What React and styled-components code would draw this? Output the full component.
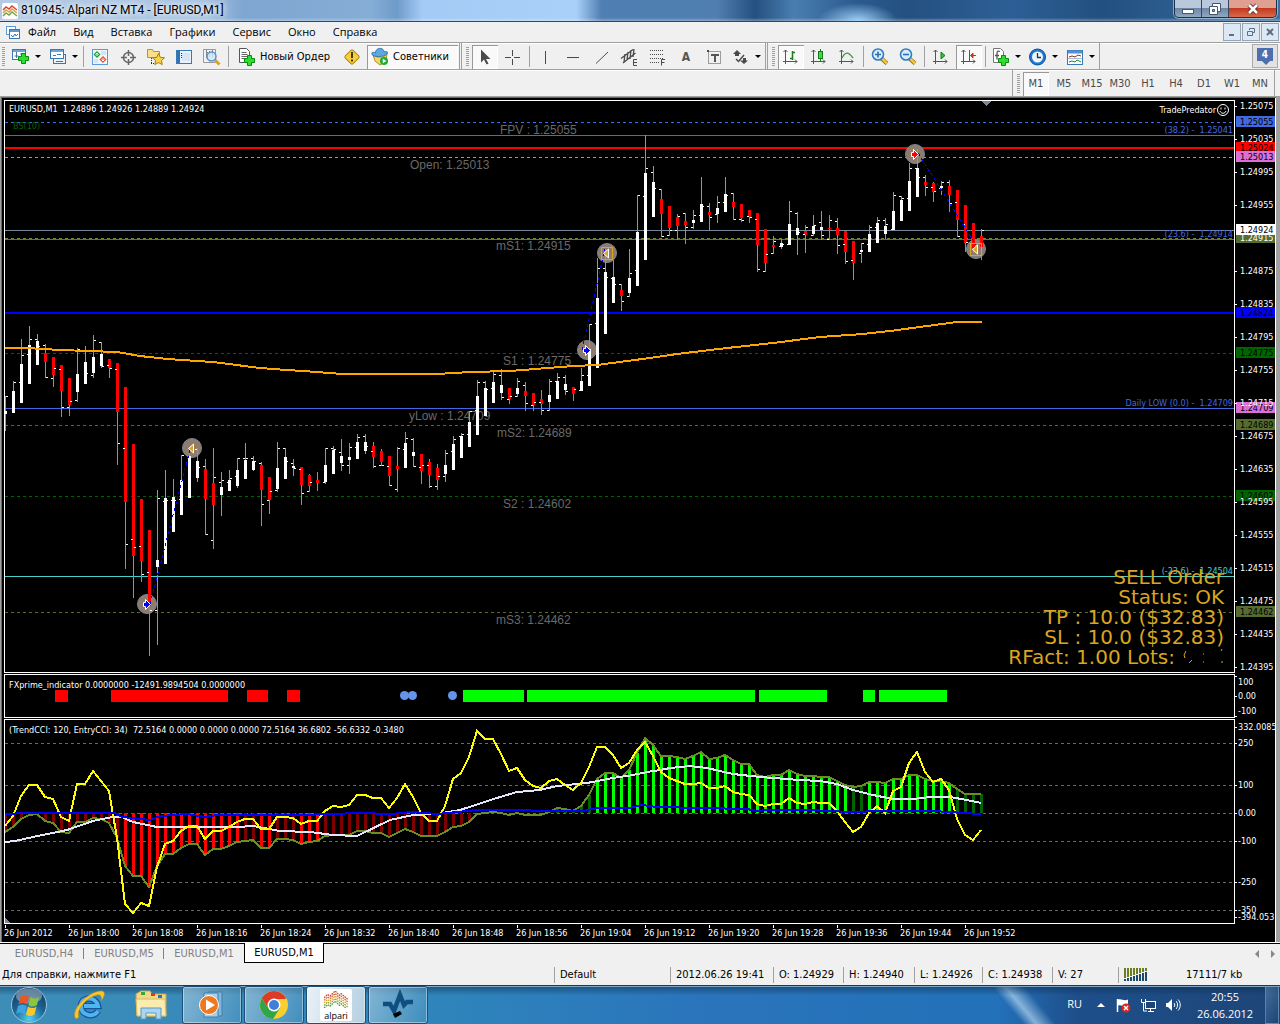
import React from 'react';
import styled, { createGlobalStyle, css } from 'styled-components';

const UI = '"DejaVu Sans Condensed", "DejaVu Sans", sans-serif';
const SEGOE = '"Open Sans", "Noto Sans", sans-serif';

const Global = createGlobalStyle`
  * { box-sizing: border-box; }
  html, body { margin: 0; background: #f0f0f0; }
  body { font: 11px/14px ${UI}; color: #000; }
  button { font: inherit; color: inherit; border: 0; margin: 0; padding: 0; background: none; }
  svg { display: block; flex: none; }
`;

/* ---------- data ---------- */

const STEP = 8;
const barX = (i) => 5 + i * STEP;

// direction, high, low, body top, body bottom, open tick, close tick
const CANDLES = `u 396 431 411 414 0 396
u 381 413 391 413 0 382
u 339 403 364 403 382 355
u 326 384 345 384 354 339
u 334 365 341 365 339 346
d 344 378 353 362 345 377
d 357 387 357 375 378 368
d 365 417 365 391 369 407
d 378 416 378 405 407 401
u 348 402 374 392 400 349
u 346 384 362 384 350 373
u 335 378 357 373 375 340
u 342 368 354 366 342 366
d 359 378 359 368 365 368
d 363 465 363 412 369 443
d 387 569 387 502 448 544
d 444 598 444 556 539 547
d 499 582 499 561 546 574
d 530 656 530 606 572 610
u 490 645 560 567 610 498
u 470 564 498 564 501 500
u 479 532 497 532 500 500
u 455 515 480 515 499 455
u 449 498 456 498 0 0
u 448 482 461 478 449 467
d 459 535 469 499 466 534
d 448 549 483 505 540 477
u 472 516 487 495 482 480
u 470 491 480 491 482 478
u 458 488 470 486 476 458
u 443 479 460 479 458 458
u 456 471 461 470 458 461
d 462 526 465 490 463 504
d 477 514 477 500 500 491
u 442 492 468 489 490 448
u 448 479 457 479 448 461
u 459 476 466 468 463 468
d 467 505 467 485 469 493
d 474 492 475 486 491 482
d 472 491 480 483 0 0
u 448 484 465 482 482 448
u 446 474 450 474 448 449
u 439 471 456 463 452 465
u 443 474 457 460 465 447
u 434 459 442 459 447 437
u 434 454 442 451 436 446
d 442 468 446 457 451 466
d 449 466 451 462 465 465
d 456 486 456 476 466 485
d 447 492 466 469 489 448
u 432 468 443 468 449 438
u 438 467 452 456 439 466
d 454 484 454 471 467 465
d 459 488 462 475 465 486
d 464 490 468 480 486 476
u 450 482 465 474 476 453
u 436 470 444 470 451 439
u 433 458 436 458 436 434
u 411 447 422 447 434 411
u 380 435 396 435 410 382
u 381 416 388 416 382 389
u 372 403 382 403 388 374
u 369 400 385 393 375 397
d 388 404 388 399 399 396
u 378 397 388 394 396 381
d 382 411 391 396 385 403
d 393 411 393 405 405 402
d 390 415 399 404 402 410
u 379 411 395 402 410 381
u 373 399 381 399 381 377
u 375 395 384 390 377 391
d 387 401 387 394 0 389
u 368 391 381 391 390 375
u 324 386 349 386 375 324
u 258 368 298 368 323 268
u 249 334 272 334 268 277
u 260 303 277 303 278 284
d 284 311 290 296 284 301
u 249 297 278 293 296 273
u 195 286 232 286 270 195
u 135 260 173 260 196 168
u 166 217 182 217 172 188
d 189 237 199 214 189 236
d 206 236 206 228 235 230
d 214 240 217 226 230 216
d 213 244 221 225 213 227
u 210 229 220 223 227 215
u 177 222 204 222 215 206
d 203 230 212 215 206 217
u 196 223 208 214 214 202
u 177 212 194 212 202 195
d 193 220 202 207 193 219
d 204 222 204 218 219 220
d 210 223 210 217 216 217
d 213 272 213 245 219 269
d 229 272 229 263 271 254
d 236 254 245 247 253 241
u 239 249 243 247 246 244
u 201 245 224 245 244 211
u 212 255 228 235 213 232
d 225 253 231 235 234 227
u 215 236 226 234 235 225
u 211 240 227 230 222 235
d 215 240 228 229 239 220
d 218 254 228 235 221 245
d 231 264 231 252 244 261
d 241 280 241 263 260 0
u 243 263 250 252 253 243
u 225 252 234 252 244 227
u 217 243 223 243 227 220
u 218 239 226 234 220 224
u 192 230 211 230 229 195
u 196 221 200 221 196 198
u 163 211 181 211 198 168
u 149 197 168 197 168 177
d 175 196 182 185 177 187
d 182 202 183 192 187 191
u 181 195 186 188 188 182
d 180 212 186 195 182 203
d 190 237 190 220 202 236
d 205 252 205 243 224 242
d 223 253 223 248 0 0
d 229 260 236 247 0 230`
  .split('\n')
  .map((row) => {
    const [dir, ...n] = row.split(' ');
    return [dir, ...n.map(Number)];
  });

const MA = '5,348 27,348 60,350 117,352 140,356 167,359 213,362 260,368 287,370 317,372 342,374 437,374 470,372 510,371 573,366 597,365 650,358 677,354 727,348 773,343 820,337 863,334 890,331 957,322 982,322';

const LEVELS = [
  [122, '#4169e1', 1, true],
  [135, '#4169e1', 1],
  [147, '#ff0000', 2],
  [157, '#da70d6', 1, true],
  [230, '#778899', 1],
  [238, '#6b8e23', 1, true],
  [239, '#4169e1', 1],
  [312, '#0000ff', 2],
  [353, '#006400', 1, true],
  [408, '#4169e1', 1],
  [425, '#556b2f', 1, true],
  [496, '#006400', 1, true],
  [576, '#48d1cc', 1],
  [612, '#556b2f', 1, true],
];

const PIVOTS = [
  [500, 134, 'FPV : 1.25055'],
  [410, 169, 'Open: 1.25013'],
  [496, 250, 'mS1: 1.24915'],
  [503, 365, 'S1 : 1.24775'],
  [409, 420, 'yLow : 1.24709'],
  [497, 437, 'mS2: 1.24689'],
  [503, 508, 'S2 : 1.24602'],
  [496, 624, 'mS3: 1.24462'],
];

const FIBS = [
  [133, '#4169e1', '(38.2) -\u00a0 1.25041'],
  [237, '#4169e1', '(23.6) -\u00a0 1.24914'],
  [406, '#4169e1', 'Daily LOW (0.0) -\u00a0 1.24709'],
  [574, '#48d1cc', '(-23.6) -\u00a0 1.24504'],
];

const MARKERS = [
  { x: 192, y: 448, kind: 'exit' },
  { x: 147, y: 604, kind: 'buy' },
  { x: 607, y: 253, kind: 'exit', boxed: true },
  { x: 587, y: 350, kind: 'buy' },
  { x: 915, y: 154, kind: 'sell' },
  { x: 976, y: 249, kind: 'exit', boxed: true },
];

const PRICE_TICKS = ['1.25075', '1.25035', '1.24995', '1.24955', '', '1.24875', '1.24835', '1.24795', '1.24755', '1.24715', '1.24675', '1.24635', '1.24595', '1.24555', '1.24515', '1.24475', '1.24435', '1.24395'];

const LEVEL_TAGS = [
  [116, '#4169e1', '#000', '1.25055'],
  [142, '#ff0000', '#000', '1.25024'],
  [151, '#da70d6', '#000', '1.25013'],
  [307, '#0000ff', '#000', '1.24824'],
  [347, '#006400', '#000', '1.24775'],
  [402, '#da70d6', '#000', '1.24709'],
  [419, '#556b2f', '#000', '1.24689'],
  [490, '#006400', '#000', '1.24602'],
  [606, '#556b2f', '#000', '1.24462'],
];

const CURRENT_TAGS = [
  [232, '#556b2f', '#fff', '1.24915'],
  [224, '#ffffff', '#000', '1.24924'],
];

const RED_BLOCKS = [[55, 68], [111, 228], [247, 268], [287, 300]];
const GREEN_BLOCKS = [[463, 524], [527, 755], [759, 827], [863, 875], [879, 947]];

const TREND = [832, 827, 819, 815, 814, 821, 823, 832, 833, 822, 822, 818, 819, 823, 838, 866, 876, 876, 887, 866, 854, 854, 848, 844, 844, 855, 849, 849, 846, 842, 841, 840, 848, 848, 839, 839, 840, 844, 842, 841, 836, 835, 835, 835, 831, 831, 833, 833, 837, 833, 829, 832, 836, 836, 836, 832, 827, 826, 822, 814, 813, 812, 813, 815, 813, 815, 815, 815, 812, 808, 809, 811, 806, 795, 779, 773, 773, 778, 770, 753, 738, 745, 756, 756, 757, 759, 756, 752, 759, 758, 755, 760, 764, 764, 775, 777, 775, 775, 770, 774, 776, 776, 777, 777, 781, 785, 787, 786, 782, 782, 783, 779, 779, 775, 775, 779, 781, 781, 783, 789, 794, 794, 794];

const ENTRY = [826, 816, 796, 785, 785, 797, 799, 817, 821, 784, 784, 771, 781, 791, 838, 904, 913, 903, 906, 867, 844, 841, 831, 826, 826, 839, 831, 831, 827, 822, 819, 819, 829, 829, 817, 817, 818, 824, 821, 821, 811, 806, 807, 805, 795, 795, 798, 798, 808, 798, 784, 797, 813, 821, 821, 806, 779, 773, 757, 731, 739, 739, 754, 771, 768, 780, 786, 788, 781, 779, 785, 790, 783, 767, 747, 747, 755, 768, 763, 750, 742, 756, 772, 778, 781, 784, 784, 783, 788, 788, 786, 792, 794, 795, 804, 806, 804, 804, 798, 803, 804, 802, 803, 803, 811, 822, 832, 827, 813, 806, 813, 791, 787, 763, 752, 772, 782, 779, 790, 819, 835, 840, 830];

const SLOW = '5,842 15,841 33,837 67,830 93,821 112,817 122,817 133,822 157,827 237,827 253,826 280,831 310,832 333,835 357,836 390,820 413,815 437,814 460,810 500,797 517,792 540,790 557,786 587,783 613,778 633,775 647,772 660,770 670,768 690,766 707,768 733,774 760,777 800,780 820,781 837,784 853,790 873,795 893,799 913,799 930,797 950,797 967,800 981,803';
const FLAT = '5,814 28,813 115,813 122,817 150,820 160,816 187,814 205,817 217,815 300,815 360,813 390,814 413,812 437,814 477,810 583,811 597,808 630,808 642,805 657,807 747,809 757,811 767,810 810,810 850,812 883,811 933,811 963,813 981,814';

const histColor = (i) => {
  if (i < 59) {
    const hot = (i > 14 && i < 30) || i === 32 || i === 33 || (i > 36 && i < 40);
    return hot ? '#ff0000' : '#800000';
  }
  if (i < 68) return 'none';
  return (i > 73 && i < 106) || (i > 107 && i < 119) ? '#00ff00' : '#006400';
};

const TIMES = ['2012', '18:00', '18:08', '18:16', '18:24', '18:32', '18:40', '18:48', '18:56', '19:04', '19:12', '19:20', '19:28', '19:36', '19:44', '19:52'];

/* ---------- icons ---------- */

const Icon = ({ size = 20, children, ...rest }) => (
  <svg width={size} height={size} viewBox={`0 0 ${size} ${size}`} fill="none" aria-hidden="true" {...rest}>
    {children}
  </svg>
);

const Plus = ({ x = 9, y = 8 }) => (
  <path transform={`translate(${x} ${y})`} d="M3.5.5h4v3h3v4h-3v3h-4v-3h-3v-4h3z" fill="#2fdc2f" stroke="#0a8a12" />
);

const Axes = () => (
  <path d="M4.5 3v14M2 14.5h14M2.5 5l2-2 2 2M14 12.5l2 2-2 2" stroke="#555" />
);

const Lens = ({ plus }) => (
  <Icon>
    <path d="M11.5 11.5l5.500 5" stroke="#8a6a10" strokeWidth="4" />
    <path d="M12 11.500l5 5" stroke="#f3c63a" strokeWidth="2.500" />
    <circle cx="8" cy="7.500" r="5.500" fill="#d9ecfb" stroke="#2f7dc4" strokeWidth="1.600" />
    <path d={plus ? 'M5 7.500h6M8 4.500v6' : 'M5 7.500h6'} stroke="#2f6fae" strokeWidth="1.600" />
  </Icon>
);

const ICONS = {
  newChart: (
    <Icon>
      <rect x="1.500" y="2.500" width="13" height="10" fill="#fff" stroke="#3a78b5" />
      <path d="M2 4h12" stroke="#6aa5dc" strokeWidth="2" />
      <path d="M5.500 5v6M3.500 9h4M9 7h3" stroke="#4a78a5" />
      <Plus x={7} y={6} />
    </Icon>
  ),
  profiles: (
    <Icon>
      <rect x="5.500" y="7.500" width="12" height="9" fill="#e8f2fc" stroke="#3a78b5" />
      <rect x="2.500" y="2.500" width="13" height="9" fill="#fff" stroke="#3a78b5" />
      <path d="M3 4h12" stroke="#6aa5dc" strokeWidth="2" />
      <path d="M5 8.500h3M9 7.500h4M8 14.500h7" stroke="#4a78a5" />
    </Icon>
  ),
  market: (
    <Icon>
      <rect x="2.500" y="2.500" width="15" height="15" fill="#eef6fe" stroke="#5a9ad8" />
      <path d="M7 4l3.500 3.500L7 11 3.500 7.500z" fill="#18a828" />
      <path d="M13 9l3.500 3.500L13 16l-3.500-3.500z" fill="#e2542a" />
      <path d="M7 6v3M5.500 7.500L7 6l1.500 1.500M13 11v3M11.500 12.500L13 14l1.500-1.500" stroke="#fff" />
      <path d="M11 5h5M11 7h5M4 13h4M4 15h4" stroke="#b9d3ec" />
    </Icon>
  ),
  target: (
    <Icon>
      <circle cx="10.500" cy="10.500" r="5" stroke="#666" strokeWidth="1.500" />
      <path d="M10.500 3v6M10.500 12v6M3 10.500h6M12 10.500h6" stroke="#666" strokeWidth="1.500" />
    </Icon>
  ),
  favorites: (
    <Icon>
      <path d="M1.500 10.500v-8h5l1 2h6v6z" fill="#f9e08a" stroke="#b99525" />
      <path d="M5.500 11v6M8 16.500H5" stroke="#333" strokeDasharray="1 1" />
      <path d="M12.500 6.500l1.800 3.800 4.200.5-3.100 2.800.9 4-3.800-2-3.700 2 .8-4-3.100-2.800 4.200-.5z" fill="#fbd348" stroke="#a87b10" />
    </Icon>
  ),
  data: (
    <Icon>
      <rect x="2.500" y="3.500" width="15" height="13" fill="#eaf3fd" stroke="#3a78b5" />
      <rect x="3" y="4" width="3" height="12" fill="#2f72b8" />
      <path d="M8 7h8M8 9h8M8 11h8M8 13h8" stroke="#c3d9ef" />
      <path d="M7 6.500h1M7 8.500h1M7 10.500h1" stroke="#333" />
    </Icon>
  ),
  tester: (
    <Icon>
      <path d="M1.500 2.500h12v13h-12z" fill="#f2f2f2" stroke="#999" />
      <path d="M4.500 3v8M7.500 4v6M10.500 3v7M4 5.500h2" stroke="#888" />
      <path d="M12.500 12.500l5 5" stroke="#d4a526" strokeWidth="3" />
      <circle cx="9.500" cy="9.500" r="4.500" fill="#cfe5f7cc" stroke="#5795c8" strokeWidth="1.500" />
    </Icon>
  ),
  order: (
    <Icon>
      <path d="M2.500 1.500h7l3 3v11h-10z" fill="#fff" stroke="#555" />
      <path d="M4.500 5.500h5M4.500 7.500h6M4.500 9.500h6M4.500 11.500h4" stroke="#666" />
      <Plus x={7} y={8} />
    </Icon>
  ),
  warning: (
    <Icon>
      <rect x="4.500" y="4.500" width="11" height="11" rx="1.500" transform="rotate(45 10 10)" fill="#f6cf3c" stroke="#b28a14" />
      <path d="M10 5v6M10 12.500v2" stroke="#4a3a08" strokeWidth="2" />
    </Icon>
  ),
  advisor: (
    <Icon>
      <path d="M3 8c3 3 11 3 14-1l-1 7-6 4-5-4z" fill="#f7d463" stroke="#b88f25" />
      <path d="M5.500 6c0-6 8.500-6 8.500-1 3-1 4.500 0 3 2-4 3-12 3.500-15 .500-1-2 1-3 3.500-1.500z" fill="#5fa8e0" stroke="#3578b0" />
      <circle cx="14" cy="14" r="4" fill="#1fae35" />
      <path d="M12.800 11.800l3.500 2.200-3.500 2.200z" fill="#fff" />
    </Icon>
  ),
  cursor: <Icon><path d="M6 2.500v13l3-3 2.500 5 2-1-2.500-4.500h4.500z" fill="#4a4a4a" /></Icon>,
  cross: <Icon><path d="M9.500 3v6M9.500 12v6M2 10.500h6M11 10.500h6" stroke="#4a4a4a" /></Icon>,
  vline: <Icon><path d="M9.500 4v13" stroke="#4a4a4a" /></Icon>,
  hline: <Icon><path d="M3 10.500h12" stroke="#4a4a4a" /></Icon>,
  trend: <Icon><path d="M4 16.500L16 5" stroke="#4a4a4a" /></Icon>,
  channel: (
    <Icon>
      <path d="M1 11.500l12-9M3 16L15.500 6M5 7l-1 8M8 5L7 13M11 3l-1 9M14 2l-1 8" stroke="#4a4a4a" strokeWidth="1.300" />
      <path d="M17 12.500h-3.500v6H17M13.500 15.500H17" stroke="#4a4a4a" />
    </Icon>
  ),
  fibo: (
    <Icon>
      <path d="M2 3.500h14M2 7.500h14M2 11.500h14M2 15.500h9" stroke="#4a4a4a" strokeDasharray="1 1" />
      <path d="M17 12.500h-3.500v6M13.500 15.500h3" stroke="#4a4a4a" />
    </Icon>
  ),
  label: (
    <Icon>
      <rect x="4.500" y="4.500" width="12" height="12" stroke="#4a4a4a" strokeDasharray="1 1" />
      <path d="M7 8h8M11 8v7" stroke="#555" strokeWidth="2" />
      <path d="M3 3h2v2H3z" fill="#4a4a4a" />
    </Icon>
  ),
  shapes: (
    <Icon>
      <path d="M6 3l4 4H8v2H4V7H2z" fill="#4a4a4a" />
      <path d="M5 12l2.500 2.500L13 8" stroke="#4a4a4a" strokeWidth="1.500" />
      <path d="M13 17l4-3.500h-2V11h-3v2.500h-3z" fill="#4a4a4a" />
    </Icon>
  ),
  bars: <Icon><Axes /><path d="M11.500 4v9M9 11.500h2.500M11.500 5.500H14" stroke="#1a7a1f" strokeWidth="1.500" /></Icon>,
  candles: <Icon><Axes /><path d="M11.500 2v12" stroke="#157a1c" /><rect x="9.500" y="4.500" width="4" height="7" fill="#3edb48" stroke="#157a1c" /></Icon>,
  line: <Icon><Axes /><path d="M5 11c3-6 6-7 11 0" stroke="#3b9a45" strokeWidth="1.400" /></Icon>,
  zoomIn: <Lens plus />,
  zoomOut: <Lens />,
  scroll: <Icon><Axes /><path d="M10 5l4 3.500-4 3.500z" fill="#2fc23c" stroke="#157a1c" /></Icon>,
  shift: <Icon><Axes /><path d="M10.500 3v11" stroke="#555" /><path d="M17 8.500h-5M14 6l-2.500 2.500L14 11z" stroke="#c03a12" fill="#c03a12" /></Icon>,
  indicators: (
    <Icon>
      <path d="M2.500 1.500h7l3 3v11h-10z" fill="#fff" stroke="#777" />
      <path d="M9 4.500c-2-1-3 0-3 2v6M4 8.500h4" stroke="#555" strokeWidth="1.300" />
      <Plus x={7} y={8} />
    </Icon>
  ),
  clock: (
    <Icon>
      <circle cx="9.500" cy="10" r="8" fill="#1f78d2" stroke="#0e4f9c" />
      <circle cx="9.500" cy="10" r="5.500" fill="#eef6fd" />
      <path d="M9.500 6v4.500H13" stroke="#333" strokeWidth="1.300" />
    </Icon>
  ),
  template: (
    <Icon>
      <rect x="2.500" y="3.500" width="15" height="14" fill="#fff" stroke="#3a78b5" />
      <path d="M3 5h14" stroke="#4f93d6" strokeWidth="3" />
      <path d="M4 10l3-1 3 1 3-2 3 1" stroke="#a02a1a" />
      <path d="M4 15l3-1 3 1 2-2 4 2" stroke="#1f8a2a" />
      <path d="M3 11.500h14" stroke="#9cc0e4" />
    </Icon>
  ),
};

/* ---------- title and menu ---------- */

const Window = styled.div`
  display: flex;
  flex-direction: column;
  min-height: 100vh;
`;

const TitleBar = styled.header`
  display: flex;
  align-items: flex-start;
  height: 22px;
  overflow: hidden;
  border-bottom: 1px solid #33475f;
  background:
    radial-gradient(ellipse 40px 18px at 67% 100%, #9fd0f8 0, transparent 100%),
    linear-gradient(180deg, transparent 0 85%, #ffffff55 100%),
    linear-gradient(90deg, #b5cbe4 0, #a9c4e2 16%, #7ea6d0 19%, #86add6 29%, #6f9bca 31%, #a3cbf5 33%, #a9d0f8 45%, #4f7fb3 47%, #507eb0 56%, #24507f 59%, #4a7db1 62%, #2b5a8d 67%, #245081 71%, #2d5f96 79%, #22507f 86%, #3b6fa5 100%);
`;

const TitleText = styled.h1`
  flex: 1;
  margin: 0;
  padding-left: 3px;
  font: 12px/21px Roboto, ${SEGOE};
  text-shadow: 0 0 6px #fff, 0 0 6px #fff;
`;

const AppIcon = styled.span`
  padding: 3px 0 0 2px;
`;

const WindowButtons = styled.div`
  display: flex;
  margin-right: 3px;
  border: 1px solid #1d3048;
  border-top: 0;
  border-radius: 0 0 5px 5px;
  overflow: hidden;
  box-shadow: 0 0 0 1px #ffffff77;
`;

const WindowButton = styled.button`
  display: grid;
  place-items: center;
  width: ${(p) => (p.$close ? 47 : 27)}px;
  height: 17px;
  border-right: ${(p) => (p.$close ? 0 : '1px solid #33475f')};
  background: ${(p) => (p.$close
    ? 'linear-gradient(#e0a091 0 45%, #c23a20 50%, #d96a4a)'
    : 'linear-gradient(#b9c8da 0 45%, #6d87a5 50%, #8fa9c4)')};
`;

const MenuBar = styled.nav`
  display: flex;
  align-items: center;
  height: 20px;
  padding: 0 1px 0 5px;
  background: #f0f0f0;
`;

const MenuList = styled.div`
  display: flex;
  flex: 1;
  gap: 17px;
  padding-left: 8px;
`;

const MenuItem = styled.button`
  font: 11px/18px ${SEGOE};
`;

const MdiButtons = styled.div`
  display: flex;
  gap: 1px;
`;

const MdiButton = styled.button`
  display: grid;
  place-items: center;
  width: 18px;
  height: 18px;
  border: 1px solid #93a5b8;
  background: #dde8f5;
`;

/* ---------- toolbars ---------- */

const pressed = css`
  background: #f9f9f9;
  box-shadow: inset 1px 1px #999, inset -1px -1px #fff;
`;

const ToolbarRow = styled.div`
  display: flex;
  justify-content: ${(p) => (p.$end ? 'flex-end' : 'flex-start')};
  height: 27px;
  padding-right: ${(p) => (p.$end ? 5 : 2)}px;
  border-top: 1px solid #a0a0a0;
  box-shadow: inset 0 1px #fff;
  background: #f0f0f0;
`;

const ToolGroup = styled.div`
  display: flex;
  align-items: center;
  padding: 1px 0 0 ${(p) => (p.$first ? 2 : 4)}px;
  border-left: ${(p) => (p.$first ? 0 : '1px solid #a0a0a0')};
  border-right: 1px solid #a0a0a0;
  margin-right: ${(p) => (p.$last ? 0 : 1)}px;
`;

const Grip = styled.span`
  width: 3px;
  height: 20px;
  margin-right: 2px;
  background: repeating-linear-gradient(#a0a0a0 0 1px, #f0f0f0 1px 2px);
`;

const Tool = styled.button`
  display: flex;
  align-items: center;
  justify-content: center;
  width: ${(p) => (p.$wide ? 37 : 26)}px;
  height: 24px;
  margin: 0 ${(p) => (p.$wide ? 0 : 1)}px;
  color: #4a4a4a;
  ${(p) => p.$on && pressed}
`;

const TextTool = styled(Tool)`
  width: auto;
  gap: 3px;
  padding: ${(p) => (p.$on ? '0 9px 0 3px' : '0 7px 0 5px')};
  color: #000;
  font: 11px/14px ${UI};
`;

const Letter = styled.span`
  font: bold 12px/14px ${UI};
  color: #555;
`;

const Caret = styled.span`
  border: 3px solid transparent;
  border-top-color: #000;
  border-bottom: 0;
  margin-left: 4px;
`;

const Separator = styled.span`
  width: 1px;
  height: 21px;
  margin: 0 2px;
  background: #a0a0a0;
`;

const Spacer = styled.span`
  flex: 1;
`;

const Chat = styled.button`
  display: grid;
  place-items: center;
  align-self: center;
  width: 26px;
  height: 24px;
  border: 1px solid #aaa;
  background: #e2e2e2;
`;

const Bubble = styled.span`
  position: relative;
  width: 16px;
  height: 13px;
  margin-bottom: 3px;
  background: #4d6fae;
  color: #fff;
  font: bold 10px/13px ${UI};
  &::after {
    content: '';
    position: absolute;
    left: 5px;
    top: 13px;
    border: 4px solid transparent;
    border-top-color: #4d6fae;
    border-bottom: 0;
  }
`;

/* ---------- chart ---------- */

const ChartFrame = styled.main`
  flex: 1;
  display: grid;
  grid-template-columns: 1fr 41px;
  grid-template-rows: minmax(573px, 1fr) 44px 205px;
  row-gap: 1px;
  padding: 3px 0 0 3px;
  background: #000;
  border: solid #a0a0a0;
  border-width: 1px 4px 0 1px;
  box-shadow: inset 1px 1px #696969, inset -1px 0 #fff;
`;

const Pane = styled.section`
  position: relative;
  border: 1px solid #fff;
  overflow: hidden;
`;

const Plot = styled.svg`
  width: 100%;
  height: 100%;
  font: 9px ${UI};
  shape-rendering: crispEdges;
`;

const Scale = styled.svg`
  width: 40px;
  height: 100%;
  font: 9px ${UI};
  fill: #fff;
  shape-rendering: crispEdges;
`;

const TimeScale = styled.div`
  grid-column: 1 / -1;
  display: flex;
  height: 18px;
  overflow: hidden;
`;

const TimeLabel = styled.span`
  flex: 0 0 64px;
  padding-top: 1px;
  font: 9px/14px ${UI};
  white-space: nowrap;
  color: #fff;
  background: linear-gradient(#fff, #fff) 1px 0 / 1px 3px no-repeat;
`;

const OrderInfo = styled.div`
  position: absolute;
  right: 10px;
  bottom: 5px;
  font: 20px/20px "DejaVu Sans", sans-serif;
  color: #daa520;
  text-align: right;
  white-space: pre;
`;

const HiddenLots = styled.svg`
  display: inline-block;
  width: 41px;
  height: 16px;
  margin-left: 8px;
`;

const Line = ({ y, color, h = 1, dashed }) => (
  <line x1="0" x2="100%" y1={y + h / 2} y2={y + h / 2} stroke={color} strokeWidth={h} strokeDasharray={dashed ? '3 3' : undefined} />
);

const Candle = ({ i, bar: [dir, hi, lo, top, bottom, open, close] }) => {
  const x = barX(i);
  return (
    <g>
      <rect x={x} y={hi} width="1" height={lo - hi} fill={dir === 'u' ? '#00ff00' : '#00ced1'} />
      <rect x={x - 1} y={top} width="3" height={bottom - top} fill={dir === 'u' ? '#fff' : '#f00'} />
      {open > 0 && <rect x={x - 2} y={open} width="2" height="1" fill="#fff" />}
      {close > 0 && <rect x={x + 1} y={close} width="2" height="1" fill="#fff" />}
    </g>
  );
};

const MarkerDisc = ({ x, y }) => (
  <circle cx={x} cy={y} r="9.500" fill="#8f7b6c" stroke="#778899" shapeRendering="auto" />
);

const MarkerGlyph = ({ x, y, kind, boxed }) => (
  <g transform={`translate(${x} ${y})`} shapeRendering="auto">
    {boxed && <rect x="-5.500" y="-5.500" width="11" height="12" fill="none" stroke="#daa520" />}
    {kind === 'exit'
      ? <path d="M-3.500 .5l5-4.500v9z" fill="#daa520" stroke="#fff" />
      : <path d="M-3.500-1.500h2v-3L3.500 .5l-5 5v-3h-2z" fill={kind === 'sell' ? '#f00' : '#00f'} stroke="#fff" />}
  </g>
);

const PricePane = () => (
  <Pane>
    <Plot>
      <g transform="translate(0 -101)">
        {LEVELS.map(([y, color, h, dashed], n) => <Line key={n} y={y} color={color} h={h} dashed={dashed} />)}
        {FIBS.map(([y, color, text]) => (
          <text key={y} x="100%" dx="-1" y={y} fill={color} textAnchor="end">{text}</text>
        ))}
      </g>
      <g transform="translate(-5 -101)">
        <g fill="#696969" fontFamily="Liberation Sans, sans-serif" fontSize="12">
          {PIVOTS.map(([x, y, text]) => <text key={text} x={x} y={y}>{text}</text>)}
        </g>
        <text x="13" y="129" fill="#006400">BS(10)</text>
        <path d="M981 101h11l-5.500 5z" fill="#778899" />
        {MARKERS.map((m) => <MarkerDisc key={m.x} {...m} />)}
        {CANDLES.map((bar, i) => <Candle key={i} i={i} bar={bar} />)}
        <polyline points={MA} fill="none" stroke="#ffa500" strokeWidth="2" />
        <path d="M150 604L190 450M582 350L605 249M918 153L976 245" stroke="#0000ff" strokeDasharray="3 3" />
        {MARKERS.map((m) => <MarkerGlyph key={m.x} {...m} />)}
        <text x="9" y="112" fill="#fff">EURUSD,M1&nbsp; 1.24896 1.24926 1.24889 1.24924</text>
      </g>
      <text x="100%" dx="-18" y="12" fill="#fff" textAnchor="end">TradePredator</text>
      <svg x="100%" overflow="visible">
        <g transform="translate(-11 9)" stroke="#fff" fill="none" shapeRendering="auto">
          <circle r="5.500" />
          <path d="M-3 1c1 3 5 3 6 0M-2-2.500v2M2-2.500v2" />
        </g>
      </svg>
    </Plot>
    <OrderInfo>
      <div>SELL Order</div>
      <div>Status: OK</div>
      <div>TP : 10.0 ($32.83)</div>
      <div>SL : 10.0 ($32.83)</div>
      <div>
        RFact: 1.00 Lots:
        <HiddenLots viewBox="0 0 41 16" aria-hidden="true">
          <path d="M3 3l-2 4 1 3M9 12l-3 3M20 6h1M39 1l-1 2M38 14h2M20 14h1" stroke="#daa520" fill="none" />
        </HiddenLots>
      </div>
    </OrderInfo>
  </Pane>
);

const Tick = ({ y }) => <rect x="0" y={y} width="2" height="1" />;

const PriceScale = () => (
  <Scale>
    <g transform="translate(0 -100)">
      {LEVEL_TAGS.map(([y, bg, , text]) => <rect key={text} x="1" y={y} width="39" height="11" fill={bg} />)}
      {LEVEL_TAGS.map(([y, , fg, text]) => <text key={text} x="5" y={y + 9} fill={fg}>{text}</text>)}
      {PRICE_TICKS.map((text, n) => text && (
        <g key={text}>
          <Tick y={106 + 33 * n} />
          <text x="5" y={109 + 33 * n}>{text}</text>
        </g>
      ))}
      {CURRENT_TAGS.map(([y, bg, fg, text]) => (
        <g key={text}>
          <rect x="1" y={y} width="39" height="11" fill={bg} />
          <text x="5" y={y + 9} fill={fg}>{text}</text>
        </g>
      ))}
    </g>
  </Scale>
);

const PrimePane = () => (
  <Pane>
    <Plot>
      <g transform="translate(-5 -675)">
        <text x="9" y="688" fill="#fff">FXprime_indicator 0.0000000 -12491.9894504 0.0000000</text>
        {RED_BLOCKS.map(([a, b]) => <rect key={a} x={a} y="690" width={b - a} height="12" fill="#f00" />)}
        {GREEN_BLOCKS.map(([a, b]) => <rect key={a} x={a} y="690" width={b - a} height="12" fill="#0f0" />)}
        {[404.5, 412.5, 452.5].map((x) => <circle key={x} cx={x} cy="695.500" r="4.500" fill="#6495ed" shapeRendering="auto" />)}
      </g>
    </Plot>
  </Pane>
);

const toPoints = (series) => series.map((y, i) => `${barX(i)},${y}`).join(' ');

const CciPane = () => (
  <Pane>
    <Plot>
      <g transform="translate(0 -720)">
        {[743, 785, 813, 841, 882, 910].map((y) => <Line key={y} y={y} color="#696969" dashed />)}
      </g>
      <g transform="translate(-5 -720)">
        <text x="9" y="733" fill="#fff">(TrendCCI: 120, EntryCCI: 34)&nbsp; 72.5164 0.0000 0.0000 0.0000 72.5164 36.6802 -56.6332 -0.3480</text>
        {TREND.map((y, i) => (
          <rect key={i} x={barX(i) - 1} y={Math.min(y, 813)} width="3" height={Math.abs(y - 813)} fill={histColor(i)} />
        ))}
        <g fill="none" strokeWidth="2">
          <polyline points={toPoints(TREND)} stroke="#6b8e23" />
          <polyline points={SLOW} stroke="#e6e6fa" />
          <polyline points={toPoints(ENTRY)} stroke="#ffff00" />
          <polyline points={FLAT} stroke="#0000ff" />
        </g>
        <path d="M5 918l5 5H5z" fill="#778899" />
      </g>
    </Plot>
  </Pane>
);

const Chart = () => (
  <ChartFrame>
    <PricePane />
    <PriceScale />
    <PrimePane />
    <Scale>
      <Tick y={2} /><Tick y={22} /><Tick y={42} />
      <text x="3" y="11">100</text>
      <text x="3" y="25">0.00</text>
      <text x="3" y="40">-100</text>
    </Scale>
    <CciPane />
    <Scale>
      <g transform="translate(0 -719)">
        {[[730, '332.0085'], [746, '250'], [788, '100'], [816, '0.00'], [844, '-100'], [885, '-250'], [913, '-350'], [920, '-394.053']].map(([y, t]) => (
          <g key={t}><Tick y={y - 3} /><text x="3" y={y}>{t}</text></g>
        ))}
      </g>
    </Scale>
    <TimeScale>
      {TIMES.map((t) => <TimeLabel key={t}>26 Jun {t}</TimeLabel>)}
    </TimeScale>
  </ChartFrame>
);

/* ---------- tabs, status, taskbar ---------- */

const Tabs = styled.div`
  display: flex;
  height: 21px;
  border-top: 1px solid #000;
  box-shadow: 0 -1px #fff;
  background: #f0f0f0;
  padding: 0 5px 0 4px;
`;

const Tab = styled.button`
  position: relative;
  width: 80px;
  height: 19px;
  font: 11px/17px ${UI};
  color: #808080;
  ${(p) => p.$active && css`
    margin-top: -1px;
    height: 20px;
    color: #000;
    background: #fff;
    border: 1px solid #000;
    border-top: 0;
  `}
  &:not(:nth-child(n + 3))::after {
    content: '';
    position: absolute;
    right: 0;
    top: 4px;
    height: 11px;
    border-right: 1px solid #808080;
  }
`;

const TabArrows = styled.div`
  display: flex;
  align-items: center;
  gap: 12px;
  margin-left: auto;
`;

const TabArrow = styled.button`
  border: 4px solid transparent;
  ${(p) => (p.$next ? 'border-right: 0; border-left-color: #888;' : 'border-left: 0; border-right-color: #888;')}
`;

const Status = styled.footer`
  display: grid;
  grid-template-columns: 1fr 116px 103px 70px 71px 68px 70px 66px 162px;
  align-items: center;
  height: 21px;
  background: #f0f0f0;
`;

const StatusCell = styled.span`
  display: flex;
  align-items: center;
  height: 16px;
  padding-left: ${(p) => (p.$first ? 2 : 5)}px;
  border-left: ${(p) => (p.$first ? 0 : '1px solid #a0a0a0')};
  white-space: nowrap;
`;

const Traffic = styled.span`
  margin-left: 38px;
`;

const Taskbar = styled.footer`
  display: flex;
  height: 39px;
  border-top: 1px solid #1b3a58;
  box-shadow: inset 0 1px #7fa6c4;
  background:
    linear-gradient(180deg, #0a2a4a88 0, transparent 25%),
    linear-gradient(50deg, transparent 0 78%, #b9daf4aa 79%, transparent 80.500%),
    linear-gradient(90deg, #3d8db8 0, #2f86bb 33%, #2a74bb 55%, #2371b9 78%, #1e4f8b 84%, #1d4577 100%);
`;

const TaskItem = styled.button`
  display: grid;
  place-items: center;
  width: ${(p) => (p.$framed ? 60 : p.$start ? 58 : 62)}px;
  height: 38px;
  margin-right: ${(p) => (p.$framed ? 2 : 0)}px;
  ${(p) => p.$framed && css`
    border: 1px solid #1c4f78;
    border-radius: 3px;
    box-shadow: inset 0 0 0 1px #ffffff66;
    background: ${p.$active ? 'linear-gradient(100deg, #e9f1f7, #b5cfe2)' : 'linear-gradient(110deg, #a9cbe0aa, #5a9cc455)'};
  `}
`;

const Tray = styled.div`
  display: flex;
  align-items: center;
  margin-left: auto;
  padding-right: 1px;
  color: #fff;
  font: 12px/17px ${SEGOE};
`;

const TrayLang = styled.button`
  margin: 0 14px 4px 0;
  font-size: 11px;
`;

const TrayIcons = styled.div`
  display: flex;
  align-items: center;
  gap: 9px;
`;

const Clock = styled.div`
  width: 80px;
  margin-left: 4px;
  text-align: center;
  font-size: 11px;
`;

const ShowDesktop = styled.button`
  width: 14px;
  height: 38px;
  border: 1px solid #8fb3d477;
  background: linear-gradient(120deg, #7ea9d066, #1d457755);
`;

const TaskIcons = {
  start: (
    <Icon size={38}>
      <defs>
        <radialGradient id="orb" cx=".5" cy=".9" r=".9">
          <stop offset="0" stopColor="#4fd0f0" /><stop offset=".5" stopColor="#1c6494" /><stop offset="1" stopColor="#123a5c" />
        </radialGradient>
      </defs>
      <circle cx="19" cy="19" r="17.500" fill="url(#orb)" stroke="#9cc6de" />
      <ellipse cx="19" cy="10" rx="13" ry="7.500" fill="#fff" opacity=".35" />
      <path d="M10.500 10.500c3-2 6-2 8.500 0l-2 8c-3-2-6-2-8.500 0z" fill="#e8562a" />
      <path d="M20.500 11c3 2 6 2 8.500 0l-2 8c-3 2-6 2-8.500 0z" fill="#8cc63f" />
      <path d="M8 20c3-2 6-2 8.500 0l-2 8c-3-2-6-2-8.500 0z" fill="#3fa3e0" />
      <path d="M18 20.500c3 2 6 2 8.500 0l-2 8c-3 2-6 2-8.500 0z" fill="#fbc52c" />
    </Icon>
  ),
  ie: (
    <Icon size={36}>
      <path d="M27 24c-4 7-17 5-17-5S25 9 27 19H13" stroke="#15539e" strokeWidth="6.500" />
      <path d="M27 24c-4 7-17 5-17-5S25 9 27 19H13" stroke="#4fb4f0" strokeWidth="4" />
      <path d="M5 32C-2 24 18 3 31 4c5 1 1 8-1 10 1-4 0-7-4-6C14 11 5 24 8 30z" fill="#f7c52d" stroke="#c48a10" strokeWidth=".6" />
    </Icon>
  ),
  folder: (
    <Icon size={36}>
      <path d="M3 7l5-3h9l2 3h14v22H4z" fill="#f3d987" stroke="#c9a648" />
      <path d="M8 5h4v3H8z" fill="#36a83b" /><path d="M18 6h4v3h-4z" fill="#d83a2a" /><path d="M25 8h4v3h-4z" fill="#2a70d0" />
      <path d="M3 12h29l1 17H4z" fill="#fbecb0" stroke="#d8b860" />
      <path d="M8 32V21h20v11h-5v-6H13v6z" fill="#a9d5f0" stroke="#5a9ac4" />
    </Icon>
  ),
  media: (
    <Icon size={36}>
      <path d="M14 5h14v24H14z" fill="#7fb6da" stroke="#3c7eab" /><path d="M10 6h14v24H10z" fill="#a8cfe8" stroke="#3c7eab" />
      <circle cx="15" cy="18" r="9.500" fill="#f0781e" stroke="#fff" />
      <path d="M12 12.500l9 5.500-9 5.500z" fill="#fff" />
    </Icon>
  ),
  chrome: (
    <Icon size={36}>
      <circle cx="18" cy="18" r="14" fill="#f8cf2c" />
      <path d="M18 18L5.900 11A14 14 0 0 1 30.100 11H18z" fill="#dd3b2a" />
      <path d="M18 18l-5.500 3.500L5.900 11A14 14 0 0 0 17 32l7-11z" fill="#2fa748" />
      <path d="M5.900 11l6.500 10.500L18 12h12a14 14 0 0 0-24-1z" fill="#dd3b2a" />
      <circle cx="18" cy="18" r="6.500" fill="#fff" /><circle cx="18" cy="18" r="5" fill="#3f7fd8" />
    </Icon>
  ),
  pulse: (
    <Icon size={36}>
      <path d="M3 17h7l4 7 6-16 4 10 3-3h6" stroke="#0f4f80" strokeWidth="4.500" />
      <path d="M13 27l7-3 2 3-7 4z" fill="#000" />
    </Icon>
  ),
};

const Peaks = ({ w, h }) => (
  <svg width={w} height={h} viewBox="0 0 30 20" fill="none" aria-hidden="true">
    {[['#c8452f', 0], ['#d8602f', 3], ['#e0a030', 6], ['#8aa83a', 9], ['#5a9a3a', 12]].map(([c, d]) => (
      <path key={c} d={`M1 ${8 + d}l4-4 3 2 6-6 5 5 2-2 8 7`} stroke={c} strokeWidth="1.500" strokeDasharray="2 1" />
    ))}
  </svg>
);

const AlpariTile = styled.span`
  display: flex;
  flex-direction: column;
  align-items: center;
  justify-content: space-between;
  width: 32px;
  height: 32px;
  padding-top: 2px;
  border-radius: 2px;
  background: #fff;
  font: 9px/11px ${SEGOE};
`;

const MENU = ['Файл', 'Вид', 'Вставка', 'Графики', 'Сервис', 'Окно', 'Справка'];
const FRAMES = ['M1', 'M5', 'M15', 'M30', 'H1', 'H4', 'D1', 'W1', 'MN'];

const T = ({ id, label, on, drop }) => (
  <Tool aria-label={label} aria-pressed={on} $on={on} $wide={drop}>
    {ICONS[id]}
    {drop && <Caret />}
  </Tool>
);

export default function App() {
  return (
    <Window>
      <Global />
      <TitleBar>
        <AppIcon>
          <svg width="16" height="16" viewBox="0 0 16 16" aria-hidden="true">
            <rect width="16" height="16" rx="2" fill="#fff" />
            <g fill="none" strokeWidth="1.500">
              <path d="M1 7l3-3 3 2 3-3 5 4" stroke="#d8452f" />
              <path d="M1 10l3-3 3 2 3-3 5 4" stroke="#e09a40" />
              <path d="M1 13l3-3 3 2 3-3 5 4" stroke="#6aa84a" />
            </g>
          </svg>
        </AppIcon>
        <TitleText>810945: Alpari NZ MT4 - [EURUSD,M1]</TitleText>
        <WindowButtons>
          <WindowButton aria-label="Minimize"><Icon size={14}><rect x="1.500" y="7.500" width="11" height="4" fill="#fff" stroke="#44566b" /></Icon></WindowButton>
          <WindowButton aria-label="Restore"><Icon size={14}><path d="M4.500 1.500h8v8h-8z" fill="#fff" stroke="#44566b" /><path d="M1.500 4.500h8v8h-8z" fill="#fff" stroke="#44566b" /><path d="M4.500 7.500h2v2h-2z" fill="#8fa3ba" stroke="#44566b" /></Icon></WindowButton>
          <WindowButton $close aria-label="Close"><Icon size={14}><path d="M3 3l8 8M11 3l-8 8" stroke="#5a2a22" strokeWidth="4.500" /><path d="M3 3l8 8M11 3l-8 8" stroke="#fff" strokeWidth="2.600" /></Icon></WindowButton>
        </WindowButtons>
      </TitleBar>

      <MenuBar>
        <Icon size={15}>
          <rect x="1.500" y="1.500" width="9" height="8" fill="#fff" stroke="#5a9ad8" />
          <rect x="4.500" y="4.500" width="10" height="9" fill="#fff" stroke="#3a78b5" />
          <path d="M5 6h9" stroke="#5a9ad8" strokeWidth="2" />
          <path d="M6 10l2 2 2-3 1 2 2-2" stroke="#3a78b5" />
        </Icon>
        <MenuList>{MENU.map((m) => <MenuItem key={m}>{m}</MenuItem>)}</MenuList>
        <MdiButtons>
          <MdiButton aria-label="Minimize chart"><Icon size={10}><path d="M2 8h5" stroke="#5c7085" strokeWidth="2" /></Icon></MdiButton>
          <MdiButton aria-label="Restore chart"><Icon size={10}><path d="M3.500 3V1.500h5v4H7M1.500 4.500h5v4h-5z" stroke="#5c7085" /></Icon></MdiButton>
          <MdiButton aria-label="Close chart"><Icon size={10}><path d="M2 2l6 6M8 2L2 8" stroke="#5c7085" strokeWidth="2" /></Icon></MdiButton>
        </MdiButtons>
      </MenuBar>

      <ToolbarRow>
        <ToolGroup $first>
          <Grip />
          <T id="newChart" label="New chart" drop />
          <T id="profiles" label="Profiles" drop />
          <Separator />
          <T id="market" label="Market watch" />
          <T id="target" label="Data window" />
          <T id="favorites" label="Navigator" />
          <T id="data" label="Terminal" />
          <T id="tester" label="Strategy tester" />
          <Separator />
          <TextTool>{ICONS.order}Новый Ордер</TextTool>
          <T id="warning" label="MetaEditor" />
          <TextTool $on aria-pressed>{ICONS.advisor}Советники</TextTool>
        </ToolGroup>
        <ToolGroup>
          <Grip />
          <T id="cursor" label="Cursor" on />
          <T id="cross" label="Crosshair" />
          <Separator />
          <T id="vline" label="Vertical line" />
          <T id="hline" label="Horizontal line" />
          <T id="trend" label="Trend line" />
          <T id="channel" label="Channel" />
          <T id="fibo" label="Fibonacci" />
          <Tool><Letter>A</Letter></Tool>
          <T id="label" label="Text label" />
          <T id="shapes" label="Shapes" drop />
        </ToolGroup>
        <ToolGroup $last>
          <Grip />
          <T id="bars" label="Bar chart" on />
          <T id="candles" label="Candlesticks" />
          <T id="line" label="Line chart" />
          <Separator />
          <T id="zoomIn" label="Zoom in" />
          <T id="zoomOut" label="Zoom out" />
          <Separator />
          <T id="scroll" label="Auto scroll" />
          <T id="shift" label="Chart shift" on />
          <Separator />
          <T id="indicators" label="Indicators" drop />
          <T id="clock" label="Periods" drop />
          <T id="template" label="Templates" drop />
        </ToolGroup>
        <Spacer />
        <Chat aria-label="Messages"><Bubble>4</Bubble></Chat>
      </ToolbarRow>

      <ToolbarRow $end>
        <ToolGroup $last>
          <Grip />
          {FRAMES.map((f) => <Tool key={f} $on={f === 'M1'}>{f}</Tool>)}
        </ToolGroup>
      </ToolbarRow>

      <Chart />

      <Tabs>
        <Tab>EURUSD,H4</Tab>
        <Tab>EURUSD,M5</Tab>
        <Tab>EURUSD,M1</Tab>
        <Tab $active>EURUSD,M1</Tab>
        <TabArrows>
          <TabArrow aria-label="Previous tab" />
          <TabArrow $next aria-label="Next tab" />
        </TabArrows>
      </Tabs>

      <Status>
        <StatusCell $first>Для справки, нажмите F1</StatusCell>
        <StatusCell>Default</StatusCell>
        <StatusCell>2012.06.26 19:41</StatusCell>
        <StatusCell>O: 1.24929</StatusCell>
        <StatusCell>H: 1.24940</StatusCell>
        <StatusCell>L: 1.24926</StatusCell>
        <StatusCell>C: 1.24938</StatusCell>
        <StatusCell>V: 27</StatusCell>
        <StatusCell>
          <svg width="24" height="13" aria-hidden="true">
            {[...Array(8)].map((_, n) => (
              <g key={n}>
                <rect x={n * 3} y="0" width="2" height={10 - n} fill="#6b7f1e" />
                <rect x={n * 3} y={11 - n} width="2" height={n + 2} fill="#1a4a6e" />
              </g>
            ))}
          </svg>
          <Traffic>17111/7 kb</Traffic>
        </StatusCell>
      </Status>

      <Taskbar>
        <TaskItem $start aria-label="Start">{TaskIcons.start}</TaskItem>
        <TaskItem aria-label="Internet Explorer">{TaskIcons.ie}</TaskItem>
        <TaskItem aria-label="Explorer">{TaskIcons.folder}</TaskItem>
        <TaskItem $framed aria-label="Media Player">{TaskIcons.media}</TaskItem>
        <TaskItem $framed aria-label="Chrome">{TaskIcons.chrome}</TaskItem>
        <TaskItem $framed $active>
          <AlpariTile><Peaks w={28} h={17} />alpari</AlpariTile>
        </TaskItem>
        <TaskItem $framed aria-label="Monitor">{TaskIcons.pulse}</TaskItem>
        <Tray>
          <TrayLang>RU</TrayLang>
          <TrayIcons>
            <Icon size={10}><path d="M1 7l4-4 4 4z" fill="#fff" /></Icon>
            <Icon size={16}>
              <path d="M2.500 2v13" stroke="#fff" strokeWidth="1.500" /><path d="M3 2.500c4-1 6 2 10 0v6c-4 2-6-1-10 0z" fill="#fff" />
              <circle cx="11" cy="11" r="4.500" fill="#d8281c" /><path d="M9 9l4 4M13 9l-4 4" stroke="#fff" strokeWidth="1.400" />
            </Icon>
            <Icon size={16}>
              <rect x="5.500" y="4.500" width="10" height="7" fill="#1d4577" stroke="#fff" /><path d="M8 14.500h6M10.500 12v2M1.500 2v3.500h4V2M3.500 6v8H7" stroke="#fff" />
            </Icon>
            <Icon size={16}>
              <path d="M1 6h2l4-4v12l-4-4H1z" fill="#fff" /><path d="M9 6c1 1 1 3 0 4M11 4c2 2 2 6 0 8M13 2.500c3 3 3 8 0 11" stroke="#fff" />
            </Icon>
          </TrayIcons>
          <Clock><div>20:55</div><div>26.06.2012</div></Clock>
          <ShowDesktop aria-label="Show desktop" />
        </Tray>
      </Taskbar>
    </Window>
  );
}
